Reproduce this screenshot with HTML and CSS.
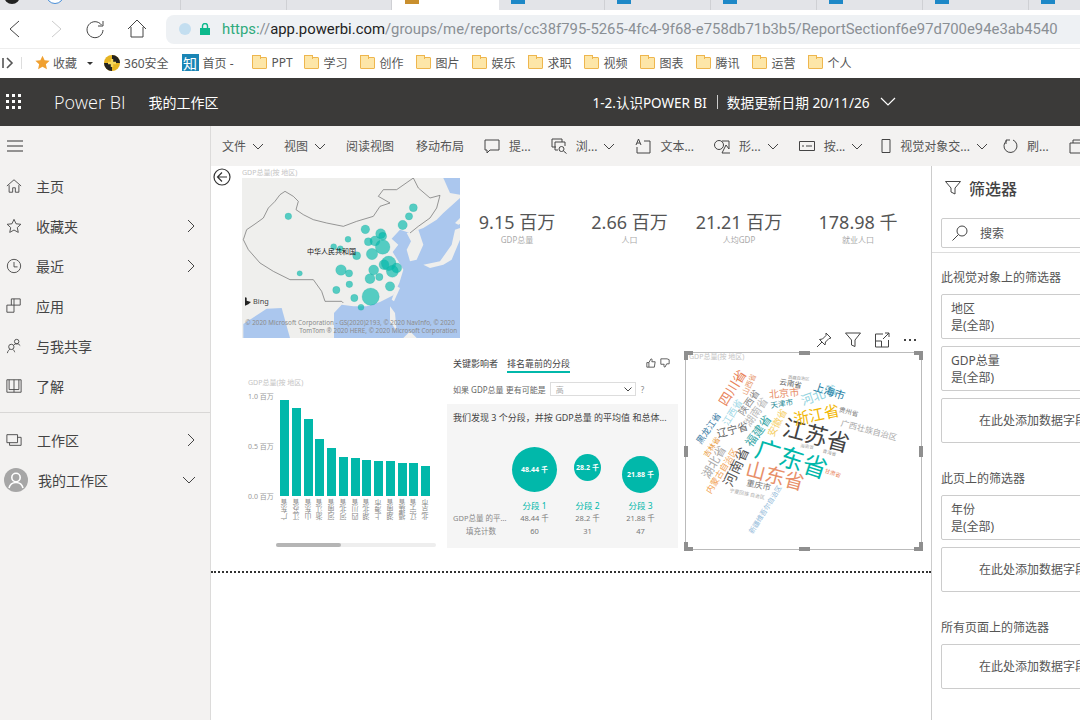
FILE: index.html
```html
<!DOCTYPE html>
<html lang="zh">
<head>
    <meta charset="utf-8">
    <title>Power BI</title>
    <link rel="stylesheet" href="styles.css">
</head>
<body>
    <!-- browser chrome -->
    <div class="tabstrip">
        <div class="tab tab-first"><span class="fav fav-dark"></span><span class="fav fav-ring"></span></div>
        <div class="tab"></div>
        <div class="tab tab-narrow"></div>
        <div class="tab tab-active"><span class="fav fav-gold"></span></div>
        <div class="tab"><span class="fav fav-blue"></span></div>
        <div class="tab"><span class="fav fav-blue"></span></div>
        <div class="tab"><span class="fav fav-blue"></span></div>
        <div class="tab"><span class="fav fav-blue"></span></div>
        <div class="tab"><span class="fav fav-blue"></span></div>
        <div class="tab"><span class="fav fav-blue"></span></div>
    </div>

    <div class="toolbar">
        <svg class="tool-btn" width="28" height="28" viewBox="0 0 28 28"><path d="M18 6 9 14l9 8" class="line"/></svg>
        <svg class="tool-btn tool-off" width="28" height="28" viewBox="0 0 28 28"><path d="m10 6 9 8-9 8" class="line"/></svg>
        <svg class="tool-btn" width="28" height="28" viewBox="2 0 28 28"><path d="M20.500 10a8 8 0 1 0 1.500 5" class="line"/><path d="M22 6v5h-5" class="line"/></svg>
        <svg class="tool-btn" width="28" height="28" viewBox="1 0 28 28"><path d="M5 14 14 5l9 9M8 12v10h12V12" class="line"/></svg>
        <div class="address">
            <span class="addr-fav"></span>
            <svg class="lock" width="10" height="12" viewBox="0 0 10 12"><rect y="5" width="10" height="7" fill="#0cb98c"/><path d="M2.500 5V3a2.500 2.500 0 0 1 5 0v2" fill="none" stroke="#0cb98c" stroke-width="1.400"/></svg>
            <span class="url"><span class="url-scheme">https:</span>//<span class="url-host">app.powerbi.com</span>/groups/me/reports/cc38f795-5265-4fc4-9f68-e758db71b3b5/ReportSectionf6e97d700e94e3ab4540</span>
        </div>
    </div>

    <div class="bookmarks">
        <svg class="bm-toggle" width="12" height="12" viewBox="0 0 12 12"><path d="M1 1v10" stroke="#555" stroke-width="1.600"/><path d="m5 1 5 5-5 5" fill="none" stroke="#555" stroke-width="1.600"/></svg>
        <span class="bm-sep"></span>
        <svg class="bm-star" width="15" height="15" viewBox="0 0 24 24"><path d="m12 1 3.400 7.400 8 .9-6 5.400 1.700 8L12 18.700l-7.100 4 1.700-8-6-5.400 8-.9z" fill="#f0a030"/></svg>
        <span class="bm-label">收藏</span>
        <span class="bm-caret"></span>
        <svg class="bm-360" width="16" height="16" viewBox="0 0 16 16"><circle cx="8" cy="8" r="8" fill="#e6b422"/><path d="M8 0a8 8 0 0 1 8 8H8zM0 8h8v8a8 8 0 0 1-8-8" fill="#222"/><path d="M8 4v8M4 8h8" stroke="#f5d65a" stroke-width="2.400"/></svg>
        <span class="bm-label bm-360-text">360安全</span>
        <span class="bm-zhi">知</span>
        <span class="bm-label bm-home">首页 -</span>
        <a class="bm-folder bm-ppt"><span class="folder"></span>PPT</a>
        <a class="bm-folder"><span class="folder"></span>学习</a>
        <a class="bm-folder"><span class="folder"></span>创作</a>
        <a class="bm-folder"><span class="folder"></span>图片</a>
        <a class="bm-folder"><span class="folder"></span>娱乐</a>
        <a class="bm-folder"><span class="folder"></span>求职</a>
        <a class="bm-folder"><span class="folder"></span>视频</a>
        <a class="bm-folder"><span class="folder"></span>图表</a>
        <a class="bm-folder"><span class="folder"></span>腾讯</a>
        <a class="bm-folder"><span class="folder"></span>运营</a>
        <a class="bm-folder"><span class="folder"></span>个人</a>
    </div>

    <!-- power bi header -->
    <header class="pbi-header">
        <svg class="waffle" width="16" height="16" viewBox="0 0 16 16" fill="#fff">
            <rect width="3" height="3"/><rect x="6" width="3" height="3"/><rect x="12" width="3" height="3"/>
            <rect y="6" width="3" height="3"/><rect x="6" y="6" width="3" height="3"/><rect x="12" y="6" width="3" height="3"/>
            <rect y="12" width="3" height="3"/><rect x="6" y="12" width="3" height="3"/><rect x="12" y="12" width="3" height="3"/>
        </svg>
        <span class="brand">Power BI</span>
        <span class="workspace">我的工作区</span>
        <span class="report-name">1-2.认识POWER BI</span>
        <span class="report-sep"></span>
        <span class="report-date">数据更新日期 20/11/26</span>
        <svg class="report-chevron" width="16" height="10" viewBox="0 0 16 10"><path d="m1 1 7 7 7-7" fill="none" stroke="#fff" stroke-width="1.200"/></svg>
    </header>

    <div class="app">
        <nav class="sidenav">
            <div class="nav-burger"><svg width="18" height="12" viewBox="0 0 18 12"><path d="M1 1h16M1 6h16M1 11h16" stroke="#333"/></svg></div>
            <a class="nav-row">
                <svg class="nav-icon" viewBox="0 0 18 18"><path d="M1 9 9 2l8 7M3.500 8v8h4v-5h3v5h4V8" class="line"/></svg>
                <span class="nav-text">主页</span>
            </a>
            <a class="nav-row">
                <svg class="nav-icon" viewBox="0 0 18 18"><path d="m9 1.500 2.300 5 5.400.6-4 3.700 1.100 5.400L9 13.500l-4.800 2.700 1.100-5.400-4-3.700 5.400-.6z" class="line"/></svg>
                <span class="nav-text">收藏夹</span>
                <svg class="nav-more" width="8" height="14" viewBox="0 0 8 14"><path d="m1 1 6 6-6 6" class="line"/></svg>
            </a>
            <a class="nav-row">
                <svg class="nav-icon" viewBox="0 0 18 18"><circle cx="9" cy="9" r="7.500" class="line"/><path d="M9 4.500V10h4" class="line"/></svg>
                <span class="nav-text">最近</span>
                <svg class="nav-more" width="8" height="14" viewBox="0 0 8 14"><path d="m1 1 6 6-6 6" class="line"/></svg>
            </a>
            <a class="nav-row">
                <svg class="nav-icon" viewBox="0 0 18 18"><path d="M1 8h8v8H1zM6 8V1h10v7H9M9 1v7" class="line"/></svg>
                <span class="nav-text">应用</span>
            </a>
            <a class="nav-row">
                <svg class="nav-icon" viewBox="0 0 18 18"><circle cx="6" cy="10" r="3" class="line"/><path d="M1.500 17c.5-2.500 2-4 3-4.300M7.500 12.800c1 .5 2 1.800 2.300 3.200" class="line"/><circle cx="12" cy="4" r="2.500" class="line"/><path d="M9 7.500c2-1.500 5-1.500 7 1" class="line"/></svg>
                <span class="nav-text">与我共享</span>
            </a>
            <a class="nav-row">
                <svg class="nav-icon" viewBox="0 0 18 18"><path d="M1 2h16v14H1zM3.500 2v11h5.500M14.500 2v11H9M9 2v14" class="line"/></svg>
                <span class="nav-text">了解</span>
            </a>
            <div class="nav-divider"></div>
            <a class="nav-row">
                <svg class="nav-icon" viewBox="0 0 18 18"><path d="M1 3h12v9H1zM4 12v3h13V6h-4" class="line"/></svg>
                <span class="nav-text nav-text-wide">工作区</span>
                <svg class="nav-more" width="8" height="14" viewBox="0 0 8 14"><path d="m1 1 6 6-6 6" class="line"/></svg>
            </a>
            <a class="nav-row">
                <svg class="nav-avatar" width="24" height="24" viewBox="0 0 24 24"><circle cx="12" cy="12" r="12" fill="#a6a6a6"/><circle cx="12" cy="9.500" r="4.200" fill="none" stroke="#fff" stroke-width="1.600"/><path d="M5 20c1-4 4-5.500 7-5.500s6 1.500 7 5.500" fill="none" stroke="#fff" stroke-width="1.600"/></svg>
                <span class="nav-text">我的工作区</span>
                <svg class="nav-more nav-more-down" width="14" height="8" viewBox="0 0 14 8"><path d="m1 1 6 6 6-6" class="line"/></svg>
            </a>
        </nav>

        <main class="report">
            <div class="ribbon">
                <span class="rb-item">文件<svg class="rb-chev" viewBox="0 0 12 7"><path d="m1 1 5 5 5-5" class="line"/></svg></span>
                <span class="rb-item">视图<svg class="rb-chev" viewBox="0 0 12 7"><path d="m1 1 5 5 5-5" class="line"/></svg></span>
                <span class="rb-item">阅读视图</span>
                <span class="rb-item rb-move">移动布局</span>
                <span class="rb-item"><svg class="rb-icon" viewBox="0 0 16 16"><path d="M1 2h14v10H6l-3 3v-3H1z" class="line"/></svg>提...</span>
                <span class="rb-item"><svg class="rb-icon" viewBox="0 0 16 16"><path d="M1 1h10v3M1 1v8h4M4 4h10v4M4 4v8h3" class="line"/><circle cx="10.500" cy="11" r="2.500" class="line"/><path d="m12.500 13 3 2.500" class="line"/></svg>浏...<svg class="rb-chev" viewBox="0 0 12 7"><path d="m1 1 5 5 5-5" class="line"/></svg></span>
                <span class="rb-item"><svg class="rb-icon" viewBox="0 0 16 16"><path d="M9 3h6v12H2V9" class="line"/><path d="m1 7 2.500-6L6 7M2 5h3" class="line"/></svg>文本...</span>
                <span class="rb-item"><svg class="rb-icon" viewBox="0 0 16 16"><circle cx="5" cy="7" r="4.500" class="line"/><path d="M8 3h7v8l-3-4-4 8h8" class="line"/></svg>形...<svg class="rb-chev" viewBox="0 0 12 7"><path d="m1 1 5 5 5-5" class="line"/></svg></span>
                <span class="rb-item"><svg class="rb-icon" viewBox="0 0 16 16"><path d="M.5 3.500h15v9H.5zM3 8h2M7 8h6" class="line"/></svg>按...<svg class="rb-chev" viewBox="0 0 12 7"><path d="m1 1 5 5 5-5" class="line"/></svg></span>
                <span class="rb-item rb-interact"><svg class="rb-icon rb-icon-small" viewBox="0 0 16 16"><path d="M4 1.500h8v13H4z" class="line"/></svg>视觉对象交...<svg class="rb-chev" viewBox="0 0 12 7"><path d="m1 1 5 5 5-5" class="line"/></svg></span>
                <span class="rb-item rb-refresh"><svg class="rb-icon" viewBox="0 0 16 16"><path d="M5 2.500A6.500 6.500 0 1 0 11 2" class="line"/><path d="M4 6V2h4" class="line" /></svg>刷...</span>
                <span class="rb-item"><svg class="rb-icon" viewBox="0 0 16 16"><path d="M1 5h14v10H1zM4 5V2h8v3" class="line"/></svg></span>
            </div>

            <div class="report-body">
                <section class="canvas">
                    <svg class="back" width="18" height="18" viewBox="0 0 18 18"><circle cx="9" cy="9" r="8" class="line line-dark"/><path d="M9 4.500 4.500 9 9 13.500M4.500 9H14" class="line line-dark"/></svg>

                    <!-- map visual -->
                    <div class="visual map-visual">
                        <div class="vis-title">GDP总量(按 地区)</div>
                        <svg class="map" viewBox="96 40 654 480" preserveAspectRatio="none">
                            <rect x="96" y="40" width="654" height="480" fill="#efefed"/>
                            <path d="M545 222 565 240 548 262 565 290 580 315 568 355 550 392 510 412 470 425 430 425 395 420 372 445 372 520H750V100L700 145 680 165 640 190 600 205 570 195Z" fill="#abc7ee"/>
                            <path d="M700 40h50v50l-30-5z" fill="#abc7ee"/>
                            <path d="M100 478 170 432 215 430 240 520H100z" fill="#abc7ee"/>
                            <path d="M590 205 625 195 640 240 620 285 600 290 590 255 603 230z" fill="#efefed"/>
                            <path d="M640 300 690 290 725 240 735 195 750 190V225L725 285 700 300 660 310zM750 160 735 175 745 180 750 178z" fill="#efefed"/>
                            <path d="M560 365 570 370 552 410 545 405z" fill="#efefed"/>
                            <path d="M540 425 555 445 560 500 540 470zM600 500 620 520H580z" fill="#efefed"/>
                            <path d="M400 415 395 410 345 410 335 380 310 345 270 345 240 345 190 320 150 295 115 255 100 225 110 195 135 178 160 160 175 130 195 110 210 90 225 80 250 95 265 110 258 135 280 150 310 165 350 175 400 185 440 170 490 155 510 125 540 115 505 95 520 75 560 75 610 40 625 70 660 100 690 92 680 130 660 160 625 185 600 205" fill="none" stroke="#666" stroke-width="2"/>
                            <g class="bubbles">
                                <circle cx="235" cy="155" r="10"/><circle cx="610" cy="129" r="12"/><circle cx="597" cy="155" r="11"/><circle cx="578" cy="181" r="14"/>
                                <circle cx="466" cy="194" r="13"/><circle cx="512" cy="207" r="15"/><circle cx="518" cy="215" r="12"/><circle cx="414" cy="224" r="9"/>
                                <circle cx="475" cy="231" r="12"/><circle cx="495" cy="229" r="15"/><circle cx="518" cy="247" r="22"/><circle cx="371" cy="246" r="9"/>
                                <circle cx="391" cy="252" r="9"/><circle cx="440" cy="273" r="12"/><circle cx="486" cy="268" r="17"/><circle cx="522" cy="300" r="15"/>
                                <circle cx="536" cy="296" r="22"/><circle cx="560" cy="310" r="15"/><circle cx="547" cy="320" r="18"/><circle cx="393" cy="316" r="16"/>
                                <circle cx="417" cy="326" r="11"/><circle cx="491" cy="316" r="15"/><circle cx="480" cy="342" r="15"/><circle cx="508" cy="337" r="11"/>
                                <circle cx="269" cy="326" r="8"/><circle cx="418" cy="359" r="10"/><circle cx="379" cy="376" r="11"/><circle cx="540" cy="365" r="14"/>
                                <circle cx="482" cy="396" r="26"/><circle cx="433" cy="400" r="11"/><circle cx="453" cy="428" r="9"/>
                            </g>
                            <text class="map-country" x="291" y="269">中华人民共和国</text>
                            <path d="M105 398v25l10-4 8-7-13-4v-9z" fill="#222"/>
                            <text class="map-bing" x="129" y="419">Bing</text>
                            <text class="map-credit" x="106" y="481">© 2020 Microsoft Corporation - GS(2020)2193, © 2020 NavInfo, © 2020</text>
                            <text class="map-credit" x="268" y="505">TomTom ® 2020 HERE, © 2020 Microsoft Corporation</text>
                        </svg>
                    </div>

                    <!-- kpi cards -->
                    <div class="kpis">
                        <div class="kpi"><div class="kpi-value">9.15 百万</div><div class="kpi-label">GDP总量</div></div>
                        <div class="kpi"><div class="kpi-value">2.66 百万</div><div class="kpi-label">人口</div></div>
                        <div class="kpi"><div class="kpi-value">21.21 百万</div><div class="kpi-label">人均GDP</div></div>
                        <div class="kpi"><div class="kpi-value">178.98 千</div><div class="kpi-label">就业人口</div></div>
                    </div>

                    <!-- bar chart -->
                    <div class="visual bar-visual">
                        <div class="vis-title">GDP总量(按 地区)</div>
                        <div class="bar-plot">
                            <div class="bar-axis"><span>1.0 百万</span><span>0.5 百万</span><span>0.0 百万</span></div>
                            <div class="bars">
                                <div class="bar-col"><div class="bar-area"><div class="bar" style="height:96px"></div></div><span class="bar-label">广东省</span></div>
                                <div class="bar-col"><div class="bar-area"><div class="bar" style="height:88px"></div></div><span class="bar-label">江苏省</span></div>
                                <div class="bar-col"><div class="bar-area"><div class="bar" style="height:77px"></div></div><span class="bar-label">山东省</span></div>
                                <div class="bar-col"><div class="bar-area"><div class="bar" style="height:57px"></div></div><span class="bar-label">浙江省</span></div>
                                <div class="bar-col"><div class="bar-area"><div class="bar" style="height:48px"></div></div><span class="bar-label">河南省</span></div>
                                <div class="bar-col"><div class="bar-area"><div class="bar" style="height:39px"></div></div><span class="bar-label">河北省</span></div>
                                <div class="bar-col"><div class="bar-area"><div class="bar" style="height:38px"></div></div><span class="bar-label">四川省</span></div>
                                <div class="bar-col"><div class="bar-area"><div class="bar" style="height:36px"></div></div><span class="bar-label">湖北省</span></div>
                                <div class="bar-col"><div class="bar-area"><div class="bar" style="height:35px"></div></div><span class="bar-label">上海市</span></div>
                                <div class="bar-col"><div class="bar-area"><div class="bar" style="height:35px"></div></div><span class="bar-label">湖南省</span></div>
                                <div class="bar-col"><div class="bar-area"><div class="bar" style="height:33px"></div></div><span class="bar-label">福建省</span></div>
                                <div class="bar-col"><div class="bar-area"><div class="bar" style="height:33px"></div></div><span class="bar-label">辽宁省</span></div>
                                <div class="bar-col"><div class="bar-area"><div class="bar" style="height:30px"></div></div><span class="bar-label">北京市</span></div>
                            </div>
                        </div>
                        <div class="bar-scroll"><div class="bar-thumb"></div></div>
                    </div>

                    <!-- key influencers -->
                    <div class="visual ki-visual">
                        <div class="ki-tabs">
                            <span class="ki-tab">关键影响者</span>
                            <span class="ki-tab ki-tab-on">排名靠前的分段</span>
                            <span class="ki-thumbs">
                                <svg width="10" height="10" viewBox="0 0 12 12"><path d="M1 5.500h2.500v5.500H1zM3.500 5.500 6 1c1.500 0 1.500 1.500 1 3.500h4L10 11H3.500" class="line"/></svg>
                                <svg width="10" height="10" viewBox="0 0 12 12"><path d="M1 1h7.500l2.500 1v5H8l-2 4c-1.500 0-1.500-2-1-3.500H1z" class="line"/></svg>
                            </span>
                        </div>
                        <div class="ki-query">
                            <span>如果 GDP总量 更有可能是</span>
                            <span class="ki-select">高<svg width="8" height="5" viewBox="0 0 8 5"><path d="m.5.500 3.500 3.500L7.500.500" class="line"/></svg></span>
                            <span class="ki-help">?</span>
                        </div>
                        <div class="ki-panel">
                            <div class="ki-headline">我们发现 3 个分段，并按 GDP总量 的平均值 和总体...</div>
                            <div class="ki-grid">
                                <span></span>
                                <div class="ki-cell"><div class="ki-circle ki-c1">48.44 千</div></div>
                                <div class="ki-cell"><div class="ki-circle ki-c2">28.2 千</div></div>
                                <div class="ki-cell"><div class="ki-circle ki-c3">21.88 千</div></div>
                                <span></span>
                                <span class="ki-seg">分段 1</span><span class="ki-seg">分段 2</span><span class="ki-seg">分段 3</span>
                                <span class="ki-key">GDP总量 的平...</span>
                                <span class="ki-val">48.44 千</span><span class="ki-val">28.2 千</span><span class="ki-val">21.88 千</span>
                                <span class="ki-key ki-key-center">填充计数</span>
                                <span class="ki-val">60</span><span class="ki-val">31</span><span class="ki-val">47</span>
                            </div>
                        </div>
                    </div>

                    <!-- word cloud, selected -->
                    <div class="vis-actions">
                        <svg width="16" height="16" viewBox="0 0 16 16"><path d="M10 1l5 5-2 .5-3.500 3.500-.5 3L3.500 7.500l3-.5L10 3.500zM6 10l-5 5" class="line"/></svg>
                        <svg width="16" height="16" viewBox="0 0 16 16"><path d="M.5 1h15L10 8v6.500L6.500 13V8z" class="line"/></svg>
                        <svg width="16" height="16" viewBox="0 0 16 16"><path d="M9 2H1.500v13h13V8M1.500 9h6v6M9 7l6-6M11 1h4v4" class="line"/></svg>
                        <span class="dots"><i></i><i></i><i></i></span>
                    </div>
                    <div class="cloud-visual">
                        <div class="vis-title cloud-title">GDP总量(按 地区)</div>
                        <svg class="cloud" viewBox="15 65 712 595">
                            <text x="335" y="385" font-size="75" fill="#01b8aa" transform="rotate(18 335 385)">广东省</text>
                            <text x="410" y="315" font-size="69" fill="#444" transform="rotate(15 410 315)">江苏省</text>
                            <text x="285" y="437" font-size="60" fill="#e8906a" transform="rotate(15 285 437)">山东省</text>
                            <text x="410" y="252" font-size="47" fill="#f2b705" transform="rotate(-12 410 252)">浙江省</text>
                            <text x="165" y="410" font-size="42" fill="#555" transform="rotate(-65 165 410)">河南省</text>
                            <text x="97" y="395" font-size="36" fill="#aaa" transform="rotate(-60 97 395)">湖北省</text>
                            <text x="155" y="170" font-size="40" fill="#e8835a" transform="rotate(-58 155 170)">四川省</text>
                            <text x="205" y="160" font-size="23" fill="#e89a70" transform="rotate(-65 205 160)">山西省</text>
                            <text x="205" y="215" font-size="29" fill="#888" transform="rotate(-55 205 215)">陕西省</text>
                            <text x="225" y="243" font-size="33" fill="#bbb" transform="rotate(-55 225 243)">湖南省</text>
                            <text x="155" y="245" font-size="29" fill="#9fd8e6" transform="rotate(-58 155 245)">江西省</text>
                            <text x="232" y="300" font-size="36" fill="#3aa8a8" transform="rotate(-55 232 300)">福建省</text>
                            <text x="290" y="276" font-size="30" fill="#f5cf6a" transform="rotate(-62 290 276)">安徽省</text>
                            <text x="155" y="298" font-size="32" fill="#666" transform="rotate(-15 155 298)">辽宁省</text>
                            <text x="82" y="293" font-size="27" fill="#3a7ca5" transform="rotate(-55 82 293)">黑龙江省</text>
                            <text x="92" y="350" font-size="23" fill="#e89a40" transform="rotate(-55 92 350)">吉林省</text>
                            <text x="123" y="423" font-size="26" fill="#f2a65a" transform="rotate(-58 123 423)">内蒙古自治区</text>
                            <text x="418" y="192" font-size="38" fill="#8fd3e0" transform="rotate(-20 418 192)">河北省</text>
                            <text x="450" y="180" font-size="33" fill="#2a7fa5" transform="rotate(18 450 180)">上海市</text>
                            <text x="312" y="186" font-size="31" fill="#e8906a" transform="rotate(-5 312 186)">北京市</text>
                            <text x="305" y="218" font-size="23" fill="#2a8a96" transform="rotate(-10 305 218)">天津市</text>
                            <text x="332" y="157" font-size="23" fill="#666" transform="rotate(10 332 157)">云南省</text>
                            <text x="508" y="243" font-size="20" fill="#777" transform="rotate(15 508 243)">贵州省</text>
                            <text x="570" y="298" font-size="25" fill="#aaa" transform="rotate(15 570 298)">广西壮族自治区</text>
                            <text x="235" y="465" font-size="25" fill="#777" transform="rotate(12 235 465)">重庆市</text>
                            <text x="255" y="540" font-size="21" fill="#8fb8d8" transform="rotate(-58 255 540)">新疆维吾尔自治区</text>
                            <text x="200" y="492" font-size="15" fill="#aaa" transform="rotate(12 200 492)">宁夏回族 自治区</text>
                            <text x="382" y="348" font-size="14" fill="#aaa" transform="rotate(8 382 348)">海南省</text>
                            <text x="450" y="367" font-size="14" fill="#999" transform="rotate(15 450 367)">青海省</text>
                            <text x="460" y="430" font-size="17" fill="#e8835a" transform="rotate(18 460 430)">甘肃省</text>
                            <text x="357" y="140" font-size="13" fill="#999" transform="rotate(5 357 140)">西藏自治区</text>
                        </svg>
                        <i class="corner corner-tl"></i><i class="corner corner-tr"></i><i class="corner corner-bl"></i><i class="corner corner-br"></i>
                        <i class="grip grip-top"></i><i class="grip grip-bottom"></i><i class="grip grip-left"></i><i class="grip grip-right"></i>
                    </div>

                    <div class="page-end"></div>
                </section>

                <aside class="filters">
                    <div class="flt-head">
                        <svg width="16" height="16" viewBox="0 0 16 16"><path d="M.5 1.500h15L10 8v6l-4-2V8z" class="line"/></svg>
                        <span>筛选器</span>
                    </div>
                    <div class="flt-search">
                        <svg width="18" height="18" viewBox="0 0 18 18"><circle cx="11" cy="7" r="5" class="line"/><path d="M7.500 10.500 1.500 16.500" class="line"/></svg>
                        <span>搜索</span>
                    </div>
                    <div class="flt-rule"></div>
                    <div class="flt-section">此视觉对象上的筛选器</div>
                    <div class="flt-card"><span>地区</span><span>是(全部)</span></div>
                    <div class="flt-card"><span>GDP总量</span><span>是(全部)</span></div>
                    <div class="flt-card flt-add">在此处添加数据字段</div>
                    <div class="flt-section flt-section-next">此页上的筛选器</div>
                    <div class="flt-card"><span>年份</span><span>是(全部)</span></div>
                    <div class="flt-card flt-add">在此处添加数据字段</div>
                    <div class="flt-section flt-section-next">所有页面上的筛选器</div>
                    <div class="flt-card flt-add">在此处添加数据字段</div>
                </aside>
            </div>
        </main>
    </div>
</body>
</html>
```

FILE: styles.css
```css
* {
    box-sizing: border-box;
}

html, body {
    margin: 0;
    height: 100%;
    overflow: hidden;
}

body {
    display: flex;
    flex-direction: column;
    width: 1080px;
    height: 720px;
    font-family: "Noto Sans", "Noto Sans CJK SC", sans-serif;
    color: #444;
    background: white;
}

.line {
    fill: none;
    stroke: #444;
    stroke-width: 1;
}

.line-dark {
    stroke: #333;
    stroke-width: 1.2;
}

/* browser chrome */
.tabstrip {
    display: flex;
    flex: none;
    height: 10px;
    background: #e3e4e8;
    overflow: hidden;
}

.tab {
    position: relative;
    width: 106px;
    flex: none;
    border-right: 1px solid #cfd0d4;
}

.tab-first {
    width: 181px;
}

.tab-narrow {
    width: 105px;
}

.tab-active {
    width: 107px;
    background: white;
    border-right: none;
}

.fav {
    position: absolute;
    left: 13px;
    bottom: 6px;
    width: 14px;
    height: 14px;
}

.fav-blue {
    left: 12px;
    background: #1e88c7;
}

.fav-gold {
    background: #c98f2e;
}

.fav-dark {
    left: 4px;
    bottom: 6px;
    width: 16px;
    height: 16px;
    border-radius: 50%;
    background: #222;
}

.fav-ring {
    left: 46px;
    bottom: 6px;
    width: 18px;
    height: 18px;
    border-radius: 50%;
    border: 1px solid #4a8fd8;
    background: white;
}

.toolbar {
    display: flex;
    flex: none;
    align-items: center;
    height: 38px;
    background: white;
}

.tool-btn {
    flex: none;
    margin-left: 1px;
    margin-right: 12px;
}

.tool-off .line {
    stroke: #ccc;
}

.address {
    display: flex;
    align-items: center;
    flex: 1;
    height: 29px;
    margin-left: 2px;
    padding-left: 13px;
    background: #eef1f4;
    border-radius: 8px 0 0 8px;
    white-space: nowrap;
    overflow: hidden;
}

.addr-fav {
    width: 12px;
    height: 12px;
    border-radius: 50%;
    background: #c3def0;
    margin-right: 9px;
}

.lock {
    margin-right: 12px;
}

.url {
    font-family: Roboto, "Noto Sans CJK SC", sans-serif;
    font-size: 14.86px;
    color: #8a8f94;
}

.url-scheme {
    color: #2eaa7c;
}

.url-host {
    color: #222;
}

.bookmarks {
    display: flex;
    flex: none;
    align-items: center;
    height: 30px;
    padding: 0 0 2px 2px;
    font-size: 12px;
    color: #555;
    background: white;
    white-space: nowrap;
    border-top: 1px solid #eee;
}

.bm-sep {
    width: 1px;
    height: 12px;
    background: #ddd;
    margin: 0 13px 0 7px;
}

.bm-star {
    margin-right: 3px;
}

.bm-caret {
    width: 0;
    height: 0;
    margin: 2px 0 0 10px;
    border: 3px solid transparent;
    border-top-color: #333;
    border-bottom: none;
}

.bm-360 {
    margin-left: 11px;
    margin-right: 4px;
}

.bm-zhi {
    display: flex;
    align-items: center;
    justify-content: center;
    width: 17px;
    height: 17px;
    margin-left: 13px;
    margin-right: 4px;
    background: #1a85b5;
    color: white;
    font-size: 14px;
}

.bm-home {
    margin-right: 18px;
}

.bm-folder {
    display: flex;
    align-items: center;
    width: 56px;
    flex: none;
}

.bm-ppt {
    width: 52px;
}

.folder {
    position: relative;
    width: 15px;
    height: 12px;
    margin-right: 5px;
    background: #fde6a8;
    border: 1px solid #eeb64e;
    border-radius: 1px;
}

.folder::before {
    content: "";
    position: absolute;
    left: -1px;
    top: -3px;
    width: 7px;
    height: 3px;
    background: #fde6a8;
    border: 1px solid #eeb64e;
    border-bottom: none;
}

/* power bi header */
.pbi-header {
    display: flex;
    flex: none;
    align-items: center;
    height: 48px;
    padding-left: 6px;
    background: #3b3a39;
    color: white;
    white-space: nowrap;
}

.brand {
    margin-left: 32px;
    font-family: "Open Sans", sans-serif;
    font-size: 18px;
    font-weight: 300;
}

.workspace {
    margin-left: 23px;
    font-size: 14px;
}

.report-name {
    margin-left: 374px;
    font-size: 13.5px;
}

.report-sep {
    width: 1px;
    height: 14px;
    margin: 0 9px 0 10px;
    background: #ccc;
}

.report-date {
    font-size: 13.7px;
}

.report-chevron {
    margin-left: 10px;
}

/* layout */
.app {
    display: flex;
    flex: 1;
    min-height: 0;
}

.sidenav {
    flex: none;
    width: 211px;
    background: #f3f2f1;
    border-right: 1px solid #dcdbda;
}

.nav-burger {
    display: flex;
    align-items: center;
    height: 40px;
    padding-left: 6px;
}

.nav-row {
    display: flex;
    align-items: center;
    height: 40px;
    padding-left: 6px;
    font-size: 14px;
    color: #444;
}

.nav-icon {
    width: 16px;
    height: 16px;
    margin-right: 14px;
    flex: none;
}

.nav-avatar {
    margin-left: -2px;
    margin-right: 10px;
    flex: none;
}

.nav-text-wide {
    margin-left: 1px;
}

.nav-more {
    margin-left: auto;
    margin-right: 15px;
}

.nav-more-down {
    margin-right: 14px;
}

.nav-divider {
    height: 1px;
    margin: 6px 0 7px;
    background: #d8d7d6;
}

/* ribbon */
.report {
    flex: 1;
    min-width: 0;
    display: flex;
    flex-direction: column;
}

.ribbon {
    display: flex;
    flex: none;
    align-items: center;
    gap: 20px;
    height: 40px;
    padding-left: 11px;
    background: #f3f2f1;
    font-size: 12px;
    color: #555;
    white-space: nowrap;
    overflow: hidden;
}

.rb-item {
    display: flex;
    align-items: center;
    flex: none;
}

.rb-icon {
    width: 16px;
    height: 16px;
    margin-right: 9px;
}

.rb-icon-small {
    margin-right: 6px;
}

.rb-chev {
    width: 12px;
    height: 7px;
    margin-left: 6px;
}

.rb-move {
    margin-left: 2px;
}

.rb-interact {
    margin-left: -5px;
}

.rb-refresh {
    margin-left: -6px;
}

.report-body {
    display: flex;
    flex: 1;
    min-height: 0;
}

/* report canvas: visuals sit where the report author dropped them */
.canvas {
    position: relative;
    flex: none;
    width: 720px;
    background: white;
}

.back {
    position: absolute;
    left: 2px;
    top: 2px;
}

.visual,
.vis-actions,
.cloud-visual,
.kpis {
    position: absolute;
}

.vis-title {
    font-size: 7px;
    line-height: 10px;
    color: #c4c4c4;
    white-space: nowrap;
}

.map-visual {
    left: 31px;
    top: 2px;
    width: 218px;
}

.map {
    display: block;
    width: 218px;
    height: 160px;
}

.bubbles circle {
    fill: #01b8aa;
    fill-opacity: 0.65;
    stroke: #0a9d92;
    stroke-opacity: 0.5;
    stroke-width: 1;
}

.map-country {
    font-size: 21px;
    fill: #111;
}

.map-bing {
    font-size: 22px;
    fill: #444;
}

.map-credit {
    font-size: 19px;
    fill: #8b8b8b;
}

.kpis {
    left: 250px;
    top: 45px;
    width: 460px;
    display: flex;
}

.kpi {
    flex: 1;
    text-align: center;
    white-space: nowrap;
}

.kpi:nth-child(1) {
    flex: none;
    width: 112px;
}

.kpi:nth-child(2) {
    flex: none;
    width: 113px;
}

.kpi:nth-child(3) {
    flex: none;
    width: 106px;
}

.kpi:nth-child(4) {
    flex: none;
    width: 132px;
}

.kpi-value {
    font-size: 18px;
    line-height: 22px;
    color: #555;
}

.kpi-label {
    font-size: 8px;
    line-height: 14px;
    color: #aaa;
}

/* bar chart */
.bar-visual {
    left: 37px;
    top: 212px;
    width: 190px;
}

.bar-plot {
    display: flex;
    margin-top: 5px;
}

.bar-axis {
    display: flex;
    flex-direction: column;
    justify-content: space-between;
    flex: none;
    width: 32px;
    height: 108px;
    font-size: 7px;
    line-height: 8px;
    color: #999;
    white-space: nowrap;
}

.bars {
    display: flex;
    gap: 2.750px;
}

.bar-col {
    width: 9px;
    flex: none;
    display: flex;
    flex-direction: column;
    align-items: center;
}

.bar-area {
    display: flex;
    align-items: flex-end;
    height: 103px;
    width: 100%;
}

.bar {
    width: 100%;
    background: #01b8aa;
}

.bar-label {
    margin-top: 3px;
    writing-mode: vertical-rl;
    transform: rotate(180deg);
    font-size: 7px;
    line-height: 9px;
    color: #888;
    white-space: nowrap;
}

.bar-scroll {
    margin: 23px 0 0 28px;
    width: 160px;
    height: 4px;
    background: #eeeeee;
    border-radius: 2px;
}

.bar-thumb {
    width: 65px;
    height: 4px;
    background: #b5b5b5;
    border-radius: 2px;
}

/* key influencers */
.ki-visual {
    left: 236px;
    top: 190px;
    width: 231px;
}

.ki-tabs {
    display: flex;
    align-items: flex-start;
    gap: 9px;
    padding-left: 6px;
    height: 18px;
    font-size: 9px;
    line-height: 16px;
    color: #444;
    white-space: nowrap;
}

.ki-tab-on {
    height: 17px;
    border-bottom: 2px solid #01b8aa;
}

.ki-thumbs {
    display: flex;
    gap: 4px;
    margin-left: auto;
    margin-right: 8px;
    margin-top: 2px;
}

.ki-query {
    display: flex;
    align-items: center;
    margin-top: 8px;
    padding-left: 6px;
    height: 14px;
    font-size: 8px;
    color: #666;
    white-space: nowrap;
}

.ki-select {
    display: flex;
    align-items: center;
    justify-content: space-between;
    width: 86px;
    height: 14px;
    margin-left: 4px;
    padding: 0 3px 0 5px;
    border: 1px solid #ddd;
    color: #aaa;
}

.ki-help {
    margin-left: 5px;
    color: #888;
}

.ki-panel {
    margin-top: 8px;
    height: 144px;
    padding: 7px 6px 0;
    background: #f5f5f5;
}

.ki-headline {
    font-size: 9px;
    line-height: 14px;
    color: #444;
    white-space: nowrap;
}

.ki-grid {
    display: grid;
    grid-template-columns: 55px repeat(3, 53px);
    grid-auto-rows: 13px;
    align-items: center;
    margin-top: 60px;
    position: relative;
    font-size: 7.500px;
    text-align: center;
    white-space: nowrap;
}

.ki-cell {
    height: 0;
    position: relative;
}

.ki-circle {
    position: absolute;
    display: flex;
    align-items: center;
    justify-content: center;
    border-radius: 50%;
    background: #01b8aa;
    color: white;
    font-size: 7px;
    font-weight: 700;
}

.ki-c1 {
    width: 45px;
    height: 45px;
    left: 4px;
    top: -45px;
}

.ki-c2 {
    width: 27px;
    height: 27px;
    left: 13px;
    top: -38px;
}

.ki-c3 {
    width: 37px;
    height: 37px;
    left: 8px;
    top: -36px;
}

.ki-seg {
    color: #01b8aa;
    font-size: 8.500px;
}

.ki-val {
    color: #777;
}

.ki-key {
    color: #888;
    text-align: left;
}

.ki-key-center {
    padding-left: 13px;
}

/* word cloud */
.vis-actions {
    left: 605px;
    top: 166px;
    display: flex;
    align-items: center;
    gap: 13px;
}

.dots {
    display: flex;
    gap: 3px;
    margin-left: 1px;
}

.dots i {
    width: 2px;
    height: 2px;
    background: #444;
}

.cloud-visual {
    left: 474px;
    top: 186px;
    width: 237px;
    height: 198px;
    border: 1px solid #bbb;
}

.cloud-title {
    position: absolute;
    left: 3px;
    top: -1px;
}

.cloud {
    display: block;
    width: 100%;
    height: 100%;
}

.cloud text {
    text-anchor: middle;
    dominant-baseline: central;
}

.corner {
    position: absolute;
    width: 9px;
    height: 9px;
    border: 0 solid #8f8f8f;
}

.corner-tl {
    left: -2px;
    top: -2px;
    border-width: 4px 0 0 4px;
}

.corner-tr {
    right: -2px;
    top: -2px;
    border-width: 4px 4px 0 0;
}

.corner-bl {
    left: -2px;
    bottom: -2px;
    border-width: 0 0 4px 4px;
}

.corner-br {
    right: -2px;
    bottom: -2px;
    border-width: 0 4px 4px 0;
}

.grip {
    position: absolute;
    background: #8f8f8f;
}

.grip-top,
.grip-bottom {
    left: 113px;
    width: 11px;
    height: 4px;
}

.grip-top {
    top: -2px;
}

.grip-bottom {
    bottom: -2px;
}

.grip-left,
.grip-right {
    top: 93px;
    width: 4px;
    height: 11px;
}

.grip-left {
    left: -2px;
}

.grip-right {
    right: -2px;
}

.page-end {
    position: absolute;
    left: 0;
    right: 0;
    top: 405px;
    border-top: 2px dotted #333;
}

/* filter pane */
.filters {
    flex: none;
    width: 149px;
    padding-left: 9px;
    background: white;
    border-left: 1px solid #ccc;
    overflow: hidden;
    font-size: 12px;
    color: #555;
    white-space: nowrap;
}

.flt-head {
    display: flex;
    align-items: center;
    gap: 8px;
    height: 43px;
    margin-left: 4px;
    font-size: 16px;
    font-weight: 500;
    color: #444;
}

.flt-search {
    display: flex;
    align-items: center;
    gap: 11px;
    width: 180px;
    height: 30px;
    margin-top: 9px;
    padding-left: 9px;
    border: 1px solid #ccc;
    border-radius: 2px;
    color: #555;
}

.flt-rule {
    height: 1px;
    margin: 4px 0 0 -9px;
    width: 160px;
    background: #ddd;
}

.flt-section {
    height: 17px;
    margin-top: 16px;
    margin-bottom: 8px;
    line-height: 17px;
}

.flt-section-next {
    margin-top: 27px;
}

.flt-card {
    display: flex;
    flex-direction: column;
    justify-content: center;
    width: 180px;
    height: 45px;
    margin-bottom: 7px;
    padding-left: 9px;
    border: 1px solid #ccc;
    border-radius: 2px;
    line-height: 17px;
}

.flt-add {
    padding-left: 37px;
}
```
